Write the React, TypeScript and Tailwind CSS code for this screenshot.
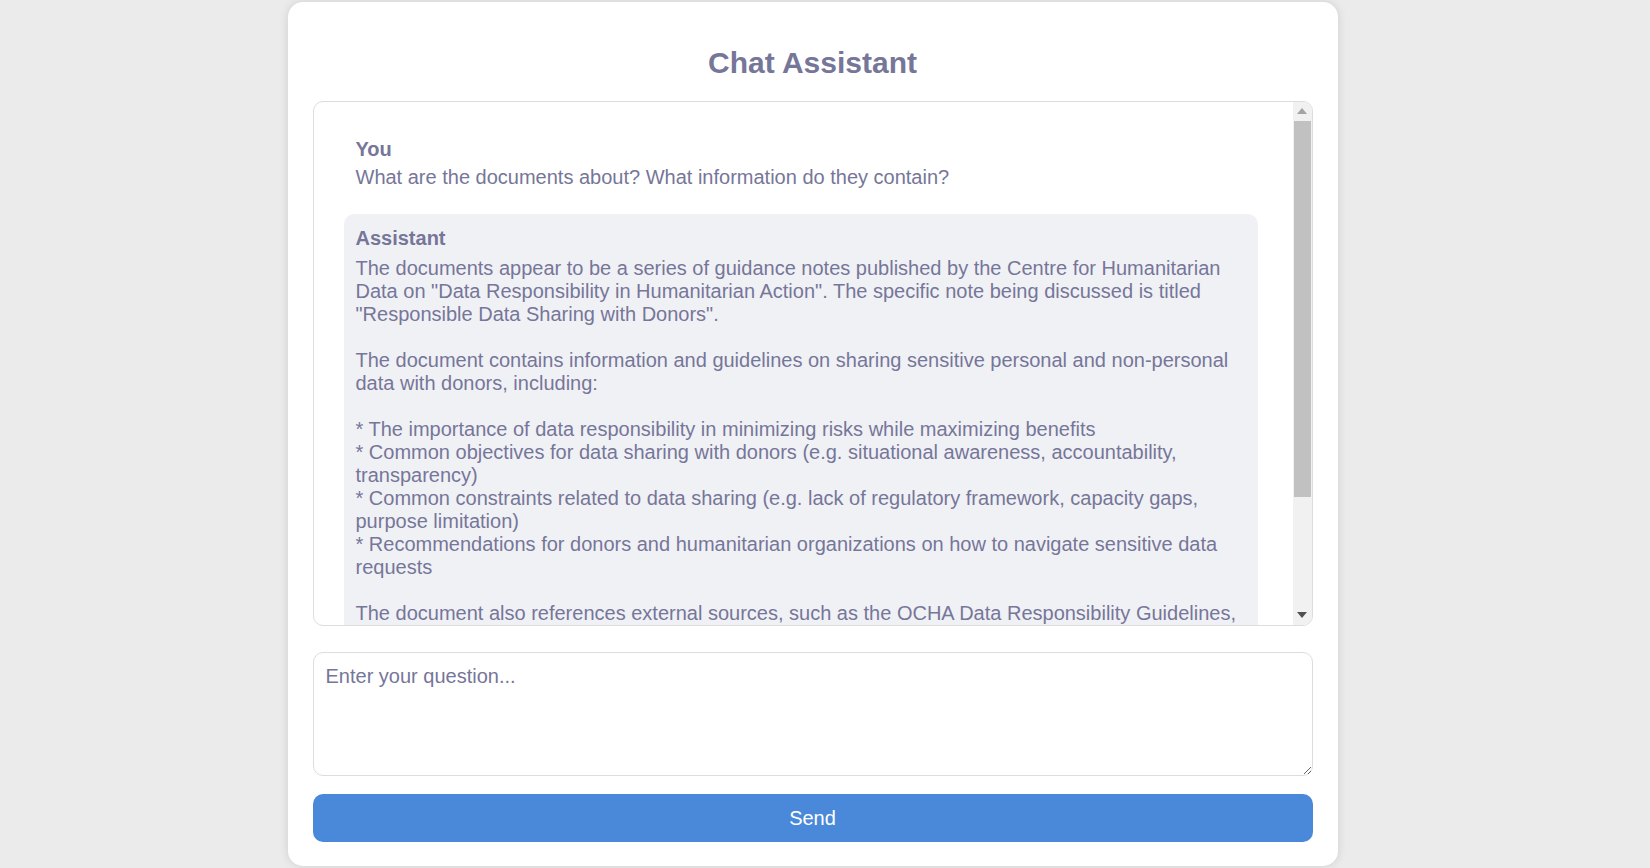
import React from "react";

const answer = `The documents appear to be a series of guidance notes published by the Centre for Humanitarian Data on "Data Responsibility in Humanitarian Action". The specific note being discussed is titled "Responsible Data Sharing with Donors".

The document contains information and guidelines on sharing sensitive personal and non-personal data with donors, including:

* The importance of data responsibility in minimizing risks while maximizing benefits
* Common objectives for data sharing with donors (e.g. situational awareness, accountability, transparency)
* Common constraints related to data sharing (e.g. lack of regulatory framework, capacity gaps, purpose limitation)
* Recommendations for donors and humanitarian organizations on how to navigate sensitive data requests

The document also references external sources, such as the OCHA Data Responsibility Guidelines, the IASC Operational Guidance on Data Responsibility in Humanitarian Action, and the ICRC Handbook on Data Protection in Humanitarian Action.

Overall, the documents aim to provide practical guidance to humanitarian organizations and donors on how to share data responsibly.`;

function ScrollBar() {
  return (
    <div className="w-[19px] shrink-0 bg-[#f1f1f1] flex flex-col">
      <div className="h-[19px] flex items-center justify-center">
        <svg width="10" height="6" viewBox="0 0 10 6">
          <polygon points="5,0 10,6 0,6" fill="#a3a3a3" />
        </svg>
      </div>
      <div className="flex-1 flex flex-col">
        <div className="h-[376px] mx-[1px] bg-[#c1c1c1]" />
      </div>
      <div className="h-[19px] flex items-center justify-center">
        <svg width="10" height="6" viewBox="0 0 10 6">
          <polygon points="0,0 10,0 5,6" fill="#505050" />
        </svg>
      </div>
    </div>
  );
}

export default function App() {
  return (
    <div
      className="min-h-screen w-full bg-[#ebebeb] flex justify-center pr-[25px] text-[#767699]"
      style={{ fontFamily: '"Liberation Sans", Arial, sans-serif' }}
    >
      <div className="w-[1050px] h-[864px] mt-[2px] bg-white rounded-[15px] shadow-[0_0_10px_rgba(0,0,0,0.12)] px-[25px] flex flex-col">
        <h1 className="mt-[44px] mb-[20px] text-[30px] leading-[34.5px] font-bold text-center text-[#767699]">
          Chat Assistant
        </h1>
        <div className="h-[525px] shrink-0 border border-[#dddddd] rounded-[10px] bg-white overflow-hidden flex">
          <div className="flex-1 overflow-hidden pt-[24px] pl-[30px] pr-[35px] text-[20px] leading-[23px]">
            <div className="bg-white rounded-[10px] px-[12px] py-[12px] mb-[13px]">
              <div className="font-bold mb-[5.5px]">You</div>
              <div className="whitespace-pre-wrap">
                What are the documents about? What information do they contain?
              </div>
            </div>
            <div className="bg-[#f0f1f5] rounded-[10px] px-[12px] pt-[13px] pb-[12px]">
              <div className="font-bold mb-[7px]">Assistant</div>
              <div className="whitespace-pre-wrap">{answer}</div>
            </div>
          </div>
          <ScrollBar />
        </div>
        <textarea
          className="mt-[26px] h-[124px] shrink-0 w-full border border-[#dddddd] rounded-[10px] px-[12px] pt-[12px] text-[20px] leading-[23px] text-[#767699] placeholder:text-[#767699] outline-none resize-y bg-white"
          style={{ fontFamily: '"Liberation Sans", Arial, sans-serif' }}
          placeholder="Enter your question..."
        />
        <button
          className="mt-[18px] h-[48px] shrink-0 w-full bg-[#4a88d9] rounded-[10px] text-white text-[20px]"
          style={{ fontFamily: '"Liberation Sans", Arial, sans-serif' }}
        >
          Send
        </button>
      </div>
    </div>
  );
}
